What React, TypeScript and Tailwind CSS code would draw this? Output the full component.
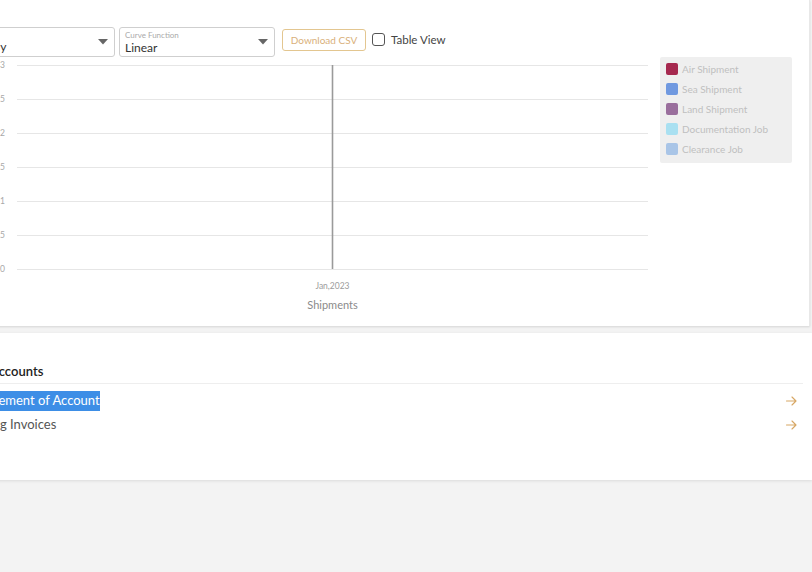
import { useState } from "react";

const Y_TICKS = ["3", "2.5", "2", "1.5", "1", "0.5", "0"];

const LEGEND = [
  { label: "Air Shipment", color: "#a6294f" },
  { label: "Sea Shipment", color: "#7099e0" },
  { label: "Land Shipment", color: "#9a6f9d" },
  { label: "Documentation Job", color: "#a9e0f1" },
  { label: "Clearance Job", color: "#a9c5e7" },
];

const ACCOUNT_LINKS = ["Statement of Account", "Aging Invoices"];

function Caret() {
  return (
    <svg width="10" height="6" viewBox="0 0 10 6" className="shrink-0">
      <path d="M0 0 L10 0 L5 5.5 Z" fill="#666" />
    </svg>
  );
}

function ArrowRight() {
  return (
    <svg width="11" height="10" viewBox="0 0 11 10" fill="none">
      <path d="M0.5 5 H10 M6 1 L10 5 L6 9" stroke="#d7a764" strokeWidth="1.1" strokeLinecap="round" strokeLinejoin="round" />
    </svg>
  );
}

function Chart() {
  // svg coords: x = page x + 40, y = page y - 57
  const lineYs = Y_TICKS.map((_, i) => 8 + i * 34);
  return (
    <svg width="700" height="269" className="shrink-0">
      {lineYs.map((y, i) => (
        <g key={i}>
          <line x1="57" x2="688" y1={y + 0.5} y2={y + 0.5} stroke="#e6e6e6" strokeWidth="1" />
          <text x="45" y={y + 3} textAnchor="end" fontSize="8.5" fill="#a8a8a8">
            {Y_TICKS[i]}
          </text>
        </g>
      ))}
      <line x1="372.5" x2="372.5" y1="8" y2="212" stroke="#9a9a9a" strokeWidth="1.6" />
      <text x="372.5" y="232" textAnchor="middle" fontSize="8.5" fill="#9c9c9c">
        Jan,2023
      </text>
      <text x="372.5" y="252" textAnchor="middle" fontSize="11" fill="#8a8a8a">
        Shipments
      </text>
    </svg>
  );
}

export default function App() {
  const [tableView, setTableView] = useState(false);

  return (
    <div
      className="w-[812px] h-[572px] overflow-hidden bg-[#f3f3f3]"
      style={{ fontFamily: "Lato, 'Noto Sans', sans-serif" }}
    >
      <div className="ml-[-60px] w-[872px] flex flex-col">
        {/* Shipments chart card */}
        <div className="w-[870px] h-[326px] bg-white border-r border-[#e8e8e8] shadow-[0_1px_2px_rgba(0,0,0,0.12)] pl-5 pt-[27px]">
          <div className="flex items-start h-[30px]">
            <div className="w-[155px] h-[30px] border border-[#cfcfcf] rounded-[3px] flex items-center justify-between pl-[1px] pr-[6px]">
              <span className="text-[12px] text-[#333] pt-[9px]">Monthly</span>
              <Caret />
            </div>
            <div className="ml-1 w-[156px] h-[30px] border border-[#cfcfcf] rounded-[3px] flex items-center justify-between pl-[5px] pr-[6px]">
              <div className="flex flex-col leading-none">
                <span className="text-[8px] text-[#aaa]">Curve Function</span>
                <span className="text-[12px] text-[#333] mt-[3px]">Linear</span>
              </div>
              <Caret />
            </div>
            <button className="ml-[7px] mt-[2px] w-[84px] h-[22px] border border-[#e3c690] rounded-[3px] text-[10px] text-[#d9b07a]">
              Download CSV
            </button>
            <label className="ml-[6px] mt-[6px] flex items-center gap-[6px] cursor-pointer">
              <span
                onClick={() => setTableView(!tableView)}
                className="w-[13px] h-[13px] border-[1.5px] border-[#555] rounded-[3px] bg-white"
              />
              <span className="text-[11.5px] text-[#444] leading-none">Table View</span>
            </label>
          </div>

          <div className="flex items-start">
            <Chart />
            <div className="w-[132px] bg-[#efefef] rounded-[2px] pt-[2px] pb-[4px] pl-[6px]">
              {LEGEND.map((item) => (
                <div key={item.label} className="h-5 flex items-center gap-1">
                  <span className="w-3 h-3 rounded-[2px]" style={{ backgroundColor: item.color }} />
                  <span className="text-[10px] text-[#bfbfbf]">{item.label}</span>
                </div>
              ))}
            </div>
          </div>
        </div>

        {/* Accounts card */}
        <div className="mt-[7px] w-[872px] h-[147px] bg-white shadow-[0_1px_3px_rgba(0,0,0,0.1)] pl-[36px] pr-[9px] pt-[29px]">
          <h3 className="text-[13px] font-semibold text-[#222] pl-[14px] h-[21px]">Accounts</h3>
          <div className="border-t border-[#eeeeee]" />
          <div className="pr-[6px] pt-[5px]">
            {ACCOUNT_LINKS.map((link, i) => (
              <div key={link} className="h-6 flex items-center justify-between">
                {i === 0 ? (
                  <span className="text-[13px] text-white bg-[#3d8ee6]">{link}</span>
                ) : (
                  <span className="text-[13px] text-[#555] ml-[-2px]">{link}</span>
                )}
                <ArrowRight />
              </div>
            ))}
          </div>
        </div>
      </div>
    </div>
  );
}
